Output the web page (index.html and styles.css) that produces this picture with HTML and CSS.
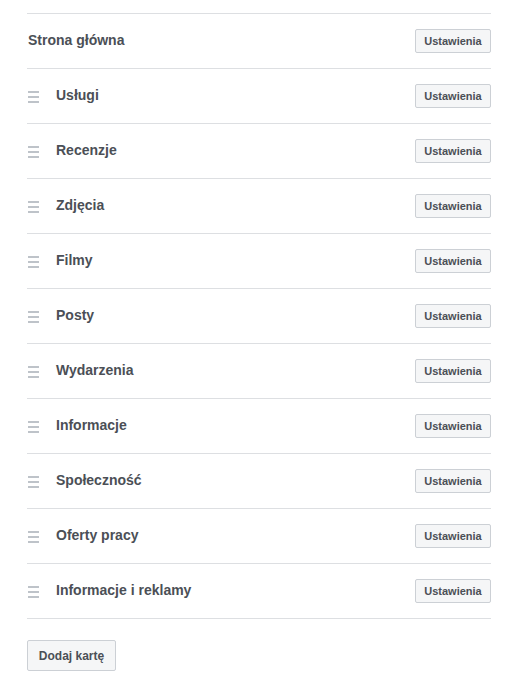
FILE: index.html
```html
<!DOCTYPE html>
<html lang="pl">
<head>
<meta charset="utf-8">
<link rel="stylesheet" href="styles.css">
</head>
<body>
<div class="panel">
  <ul class="tabs">
    <li class="tab">
      <span class="label main">Strona główna</span>
      <button class="btn small">Ustawienia</button>
    </li>
    <li class="tab"><span class="handle"><i></i><i></i><i></i></span><span class="label">Usługi</span><button class="btn small">Ustawienia</button></li>
    <li class="tab"><span class="handle"><i></i><i></i><i></i></span><span class="label">Recenzje</span><button class="btn small">Ustawienia</button></li>
    <li class="tab"><span class="handle"><i></i><i></i><i></i></span><span class="label">Zdjęcia</span><button class="btn small">Ustawienia</button></li>
    <li class="tab"><span class="handle"><i></i><i></i><i></i></span><span class="label">Filmy</span><button class="btn small">Ustawienia</button></li>
    <li class="tab"><span class="handle"><i></i><i></i><i></i></span><span class="label">Posty</span><button class="btn small">Ustawienia</button></li>
    <li class="tab"><span class="handle"><i></i><i></i><i></i></span><span class="label">Wydarzenia</span><button class="btn small">Ustawienia</button></li>
    <li class="tab"><span class="handle"><i></i><i></i><i></i></span><span class="label">Informacje</span><button class="btn small">Ustawienia</button></li>
    <li class="tab"><span class="handle"><i></i><i></i><i></i></span><span class="label">Społeczność</span><button class="btn small">Ustawienia</button></li>
    <li class="tab"><span class="handle"><i></i><i></i><i></i></span><span class="label">Oferty pracy</span><button class="btn small">Ustawienia</button></li>
    <li class="tab"><span class="handle"><i></i><i></i><i></i></span><span class="label">Informacje i reklamy</span><button class="btn small">Ustawienia</button></li>
  </ul>
  <button class="btn large">Dodaj kartę</button>
</div>
</body>
</html>
```
FILE: styles.css
```css
html, body {
  margin: 0;
  padding: 0;
  background: #fff;
}
body {
  font-family: "Liberation Sans", Arial, Helvetica, sans-serif;
  color: #4b4f56;
}
.panel {
  width: 464px;
  padding: 13px 0 0 27px;
}
.tabs {
  list-style: none;
  margin: 0;
  padding: 0;
  border-top: 1px solid #dddfe2;
}
.tab {
  display: flex;
  align-items: center;
  height: 54px;
  border-bottom: 1px solid #dddfe2;
}
.label {
  flex: 1;
  font-size: 14px;
  font-weight: bold;
  color: #4b4f56;
  margin-top: -2px;
}
.main {
  padding-left: 1px;
}
.handle {
  display: flex;
  flex-direction: column;
  gap: 3px;
  width: 11px;
  margin: 1px 17px 0 1px;
}
.handle i {
  display: block;
  height: 2px;
  background: #bec3c9;
}
.btn {
  font-family: inherit;
  font-weight: bold;
  color: #4b4f56;
  background: #f5f6f7;
  border: 1px solid #ccd0d5;
  border-radius: 2px;
  cursor: pointer;
  padding: 0;
}
.btn.small {
  width: 76px;
  height: 24px;
  font-size: 11px;
}
.btn.large {
  display: block;
  width: 89px;
  height: 31px;
  font-size: 12px;
  margin-top: 21px;
}
```
